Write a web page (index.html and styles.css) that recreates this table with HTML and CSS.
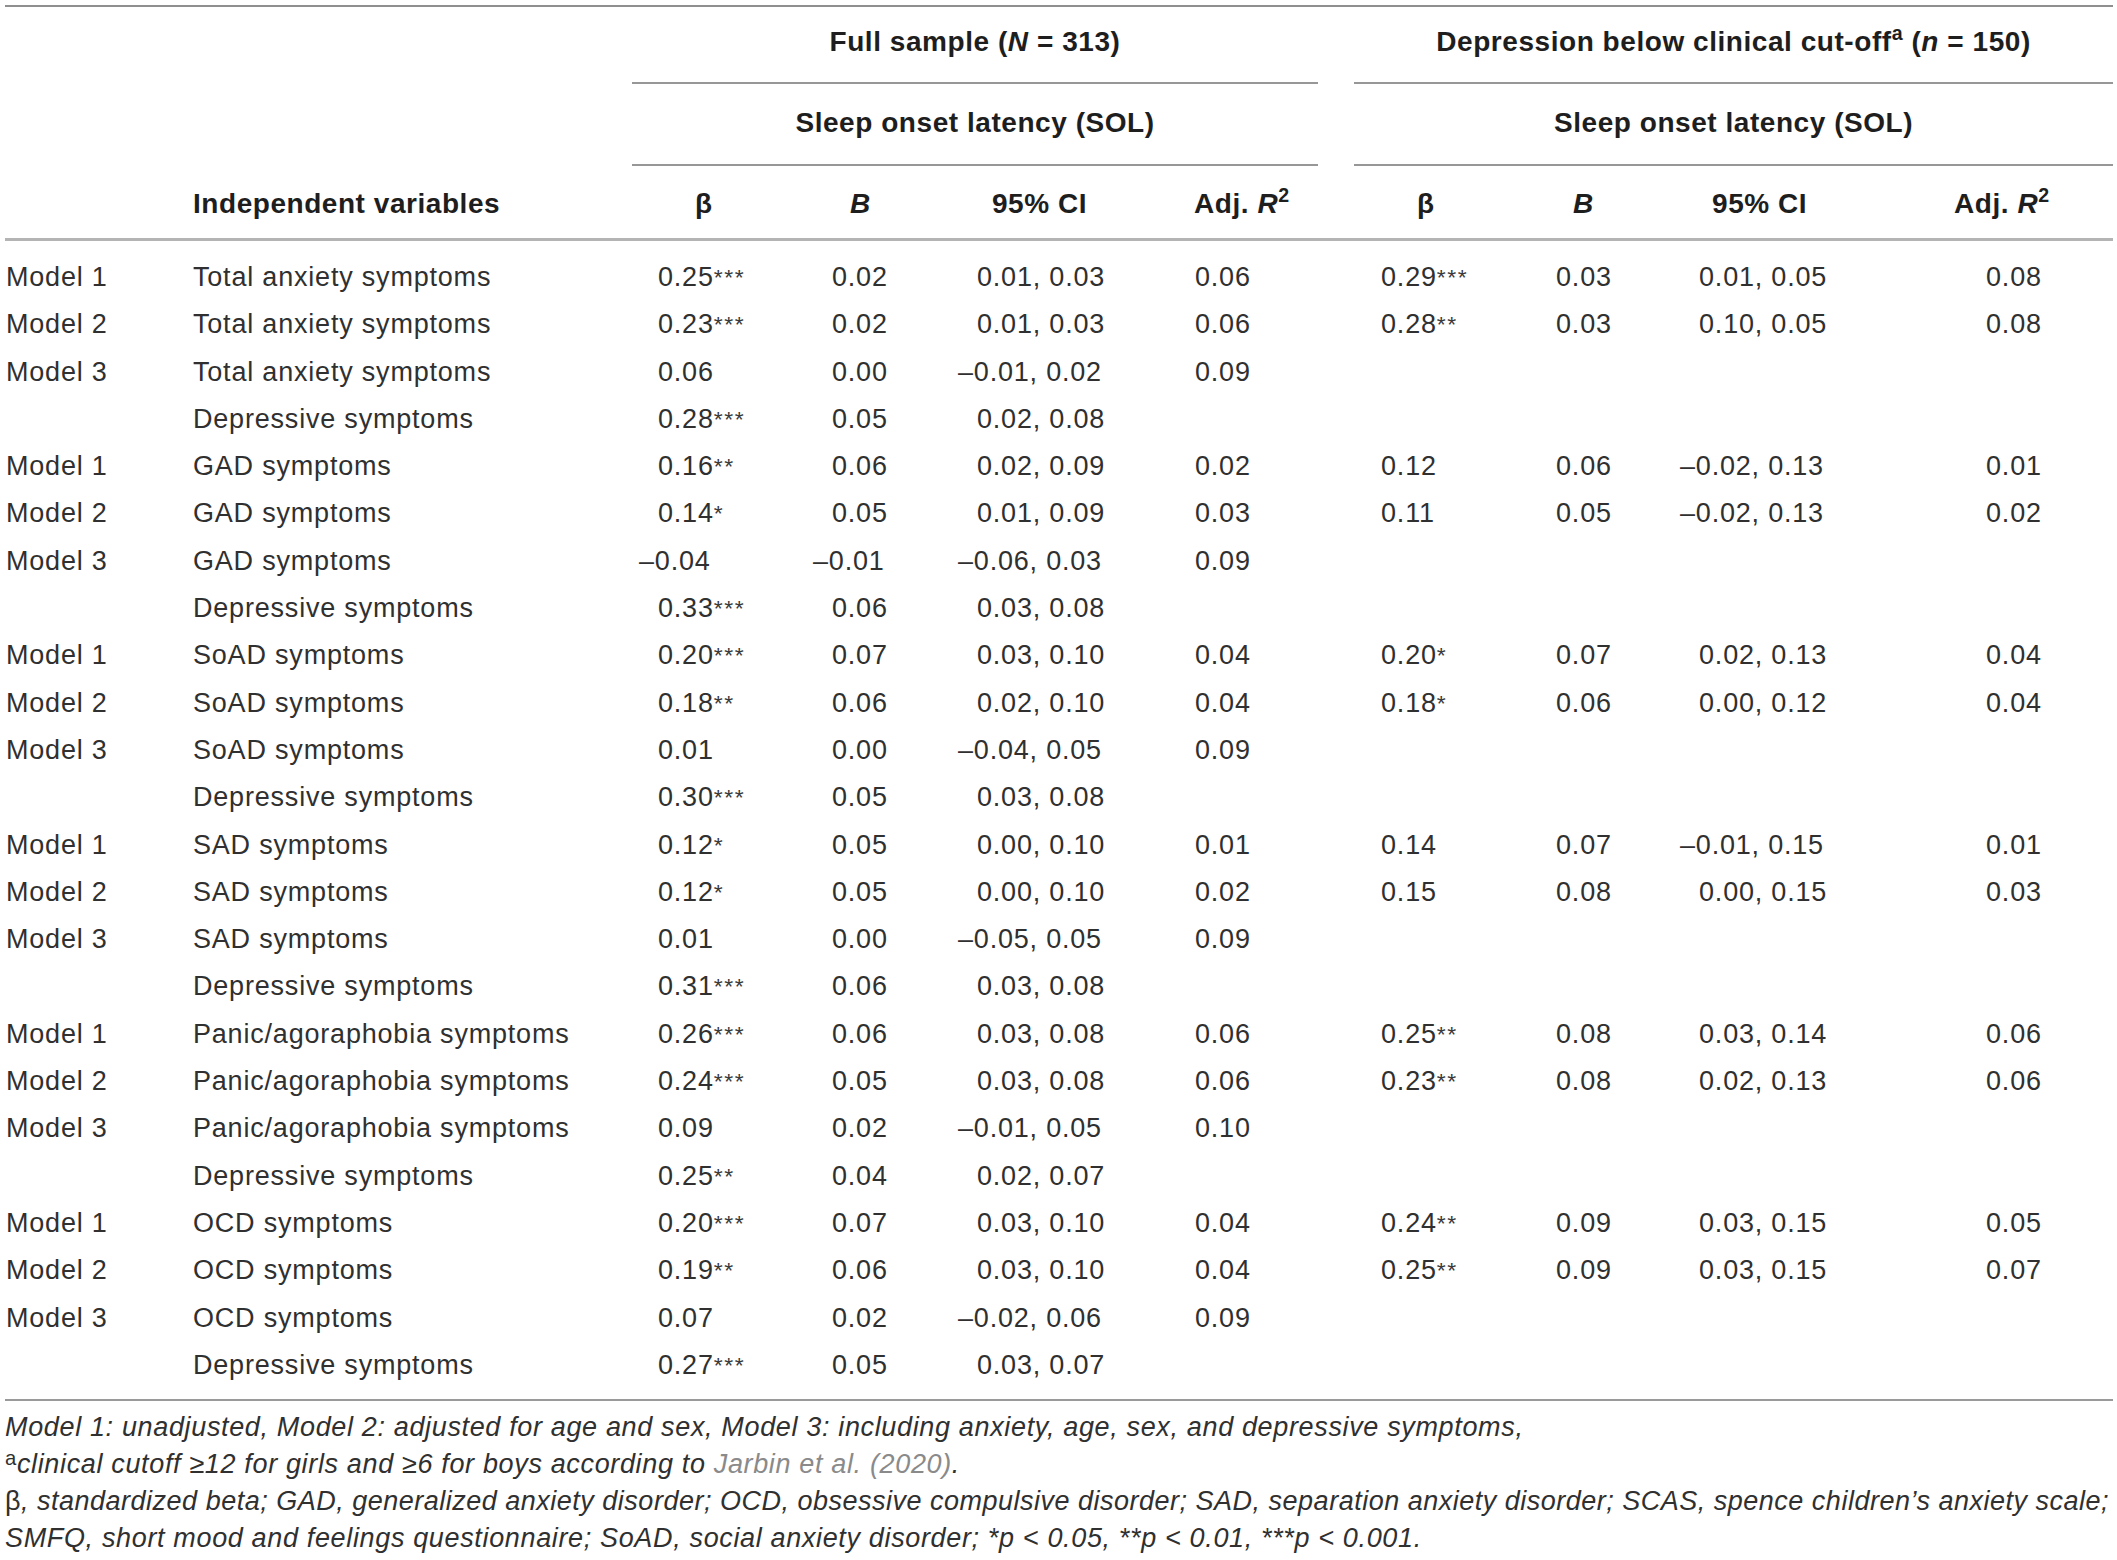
FILE: index.html
```html
<!DOCTYPE html>
<html lang="en">
<head>
<meta charset="utf-8">
<title>Table</title>
<link rel="stylesheet" href="styles.css">
</head>
<body>
<div class="page">
<table class="tbl">
  <colgroup>
    <col class="w-model"><col class="w-var">
    <col class="w-b1"><col class="w-bb1"><col class="w-ci1"><col class="w-adj1">
    <col class="w-gap">
    <col class="w-b2"><col class="w-bb2"><col class="w-ci2"><col class="w-adj2">
  </colgroup>
  <thead>
    <tr class="h1">
      <th colspan="2"></th>
      <th colspan="4" class="grp">Full sample (<i>N</i> = 313)</th>
      <th class="gap"></th>
      <th colspan="4" class="grp">Depression below clinical cut-off<sup class="hs">a</sup> (<i>n</i> = 150)</th>
    </tr>
    <tr class="h2">
      <th colspan="2"></th>
      <th colspan="4" class="grp">Sleep onset latency (SOL)</th>
      <th class="gap"></th>
      <th colspan="4" class="grp">Sleep onset latency (SOL)</th>
    </tr>
    <tr class="h3">
      <th class="c-model"></th>
      <th class="c-var">Independent variables</th>
      <th class="hb1 beta">β</th>
      <th class="hbb1"><i>B</i></th>
      <th class="hci1">95% CI</th>
      <th class="hadj1">Adj. <i>R</i><sup class="hs">2</sup></th>
      <th class="gap"></th>
      <th class="hb2 beta">β</th>
      <th class="hbb2"><i>B</i></th>
      <th class="hci2">95% CI</th>
      <th class="hadj2">Adj. <i>R</i><sup class="hs">2</sup></th>
    </tr>
  </thead>
  <tbody>
    <tr class="first"><td class="c-model">Model 1</td><td class="c-var">Total anxiety symptoms</td><td class="b1">0.25<span class="st">***</span></td><td class="bb1">0.02</td><td class="ci1">0.01, 0.03</td><td class="adj1">0.06</td><td></td><td class="b2">0.29<span class="st">***</span></td><td class="bb2">0.03</td><td class="ci2">0.01, 0.05</td><td class="adj2">0.08</td></tr>
    <tr><td class="c-model">Model 2</td><td class="c-var">Total anxiety symptoms</td><td class="b1">0.23<span class="st">***</span></td><td class="bb1">0.02</td><td class="ci1">0.01, 0.03</td><td class="adj1">0.06</td><td></td><td class="b2">0.28<span class="st">**</span></td><td class="bb2">0.03</td><td class="ci2">0.10, 0.05</td><td class="adj2">0.08</td></tr>
    <tr><td class="c-model">Model 3</td><td class="c-var">Total anxiety symptoms</td><td class="b1">0.06</td><td class="bb1">0.00</td><td class="ci1 neg">–0.01, 0.02</td><td class="adj1">0.09</td><td></td><td></td><td></td><td></td><td></td></tr>
    <tr><td class="c-model"></td><td class="c-var">Depressive symptoms</td><td class="b1">0.28<span class="st">***</span></td><td class="bb1">0.05</td><td class="ci1">0.02, 0.08</td><td class="adj1"></td><td></td><td></td><td></td><td></td><td></td></tr>

    <tr><td class="c-model">Model 1</td><td class="c-var">GAD symptoms</td><td class="b1">0.16<span class="st">**</span></td><td class="bb1">0.06</td><td class="ci1">0.02, 0.09</td><td class="adj1">0.02</td><td></td><td class="b2">0.12</td><td class="bb2">0.06</td><td class="ci2 neg">–0.02, 0.13</td><td class="adj2">0.01</td></tr>
    <tr><td class="c-model">Model 2</td><td class="c-var">GAD symptoms</td><td class="b1">0.14<span class="st">*</span></td><td class="bb1">0.05</td><td class="ci1">0.01, 0.09</td><td class="adj1">0.03</td><td></td><td class="b2">0.11</td><td class="bb2">0.05</td><td class="ci2 neg">–0.02, 0.13</td><td class="adj2">0.02</td></tr>
    <tr><td class="c-model">Model 3</td><td class="c-var">GAD symptoms</td><td class="b1 neg">–0.04</td><td class="bb1 neg">–0.01</td><td class="ci1 neg">–0.06, 0.03</td><td class="adj1">0.09</td><td></td><td></td><td></td><td></td><td></td></tr>
    <tr><td class="c-model"></td><td class="c-var">Depressive symptoms</td><td class="b1">0.33<span class="st">***</span></td><td class="bb1">0.06</td><td class="ci1">0.03, 0.08</td><td class="adj1"></td><td></td><td></td><td></td><td></td><td></td></tr>

    <tr><td class="c-model">Model 1</td><td class="c-var">SoAD symptoms</td><td class="b1">0.20<span class="st">***</span></td><td class="bb1">0.07</td><td class="ci1">0.03, 0.10</td><td class="adj1">0.04</td><td></td><td class="b2">0.20<span class="st">*</span></td><td class="bb2">0.07</td><td class="ci2">0.02, 0.13</td><td class="adj2">0.04</td></tr>
    <tr><td class="c-model">Model 2</td><td class="c-var">SoAD symptoms</td><td class="b1">0.18<span class="st">**</span></td><td class="bb1">0.06</td><td class="ci1">0.02, 0.10</td><td class="adj1">0.04</td><td></td><td class="b2">0.18<span class="st">*</span></td><td class="bb2">0.06</td><td class="ci2">0.00, 0.12</td><td class="adj2">0.04</td></tr>
    <tr><td class="c-model">Model 3</td><td class="c-var">SoAD symptoms</td><td class="b1">0.01</td><td class="bb1">0.00</td><td class="ci1 neg">–0.04, 0.05</td><td class="adj1">0.09</td><td></td><td></td><td></td><td></td><td></td></tr>
    <tr><td class="c-model"></td><td class="c-var">Depressive symptoms</td><td class="b1">0.30<span class="st">***</span></td><td class="bb1">0.05</td><td class="ci1">0.03, 0.08</td><td class="adj1"></td><td></td><td></td><td></td><td></td><td></td></tr>

    <tr><td class="c-model">Model 1</td><td class="c-var">SAD symptoms</td><td class="b1">0.12<span class="st">*</span></td><td class="bb1">0.05</td><td class="ci1">0.00, 0.10</td><td class="adj1">0.01</td><td></td><td class="b2">0.14</td><td class="bb2">0.07</td><td class="ci2 neg">–0.01, 0.15</td><td class="adj2">0.01</td></tr>
    <tr><td class="c-model">Model 2</td><td class="c-var">SAD symptoms</td><td class="b1">0.12<span class="st">*</span></td><td class="bb1">0.05</td><td class="ci1">0.00, 0.10</td><td class="adj1">0.02</td><td></td><td class="b2">0.15</td><td class="bb2">0.08</td><td class="ci2">0.00, 0.15</td><td class="adj2">0.03</td></tr>
    <tr><td class="c-model">Model 3</td><td class="c-var">SAD symptoms</td><td class="b1">0.01</td><td class="bb1">0.00</td><td class="ci1 neg">–0.05, 0.05</td><td class="adj1">0.09</td><td></td><td></td><td></td><td></td><td></td></tr>
    <tr><td class="c-model"></td><td class="c-var">Depressive symptoms</td><td class="b1">0.31<span class="st">***</span></td><td class="bb1">0.06</td><td class="ci1">0.03, 0.08</td><td class="adj1"></td><td></td><td></td><td></td><td></td><td></td></tr>

    <tr><td class="c-model">Model 1</td><td class="c-var">Panic/agoraphobia symptoms</td><td class="b1">0.26<span class="st">***</span></td><td class="bb1">0.06</td><td class="ci1">0.03, 0.08</td><td class="adj1">0.06</td><td></td><td class="b2">0.25<span class="st">**</span></td><td class="bb2">0.08</td><td class="ci2">0.03, 0.14</td><td class="adj2">0.06</td></tr>
    <tr><td class="c-model">Model 2</td><td class="c-var">Panic/agoraphobia symptoms</td><td class="b1">0.24<span class="st">***</span></td><td class="bb1">0.05</td><td class="ci1">0.03, 0.08</td><td class="adj1">0.06</td><td></td><td class="b2">0.23<span class="st">**</span></td><td class="bb2">0.08</td><td class="ci2">0.02, 0.13</td><td class="adj2">0.06</td></tr>
    <tr><td class="c-model">Model 3</td><td class="c-var">Panic/agoraphobia symptoms</td><td class="b1">0.09</td><td class="bb1">0.02</td><td class="ci1 neg">–0.01, 0.05</td><td class="adj1">0.10</td><td></td><td></td><td></td><td></td><td></td></tr>
    <tr><td class="c-model"></td><td class="c-var">Depressive symptoms</td><td class="b1">0.25<span class="st">**</span></td><td class="bb1">0.04</td><td class="ci1">0.02, 0.07</td><td class="adj1"></td><td></td><td></td><td></td><td></td><td></td></tr>

    <tr><td class="c-model">Model 1</td><td class="c-var">OCD symptoms</td><td class="b1">0.20<span class="st">***</span></td><td class="bb1">0.07</td><td class="ci1">0.03, 0.10</td><td class="adj1">0.04</td><td></td><td class="b2">0.24<span class="st">**</span></td><td class="bb2">0.09</td><td class="ci2">0.03, 0.15</td><td class="adj2">0.05</td></tr>
    <tr><td class="c-model">Model 2</td><td class="c-var">OCD symptoms</td><td class="b1">0.19<span class="st">**</span></td><td class="bb1">0.06</td><td class="ci1">0.03, 0.10</td><td class="adj1">0.04</td><td></td><td class="b2">0.25<span class="st">**</span></td><td class="bb2">0.09</td><td class="ci2">0.03, 0.15</td><td class="adj2">0.07</td></tr>
    <tr><td class="c-model">Model 3</td><td class="c-var">OCD symptoms</td><td class="b1">0.07</td><td class="bb1">0.02</td><td class="ci1 neg">–0.02, 0.06</td><td class="adj1">0.09</td><td></td><td></td><td></td><td></td><td></td></tr>
    <tr class="last"><td class="c-model"></td><td class="c-var">Depressive symptoms</td><td class="b1">0.27<span class="st">***</span></td><td class="bb1">0.05</td><td class="ci1">0.03, 0.07</td><td class="adj1"></td><td></td><td></td><td></td><td></td><td></td></tr>
  </tbody>
</table>
<div class="notes">
  <p class="note">Model 1: unadjusted, Model 2: adjusted for age and sex, Model 3: including anxiety, age, sex, and depressive symptoms,</p>
  <p class="note"><sup class="ns">a</sup>clinical cutoff ≥12 for girls and ≥6 for boys according to <a class="ref">Jarbin et al. (2020)</a>.</p>
  <p class="note tight"><span class="up">β</span>, standardized beta; GAD, generalized anxiety disorder; OCD, obsessive compulsive disorder; SAD, separation anxiety disorder; SCAS, spence children’s anxiety scale;</p>
  <p class="note">SMFQ, short mood and feelings questionnaire; SoAD, social anxiety disorder; *p &lt; 0.05, **p &lt; 0.01, ***p &lt; 0.001.</p>
</div>
</div>
</body>
</html>
```

FILE: styles.css
```css
html, body {
  margin: 0;
  padding: 0;
  background: #ffffff;
}

body {
  font-family: "Liberation Sans", Arial, sans-serif;
  color: #303030;
}

.page {
  padding: 5px 4px 0 5px;
}

.tbl {
  border-collapse: collapse;
  table-layout: fixed;
  width: 2108px;
}

.w-model { width: 185px; }
.w-var { width: 442px; }
.w-b1 { width: 148px; }
.w-bb1 { width: 170px; }
.w-ci1 { width: 200px; }
.w-adj1 { width: 168px; }
.w-gap { width: 36px; }
.w-b2 { width: 166px; }
.w-bb2 { width: 150px; }
.w-ci2 { width: 260px; }
.w-adj2 { width: 183px; }

/* header */
.tbl th {
  font-size: 28px;
  line-height: 32px;
  font-weight: bold;
  letter-spacing: 0.55px;
  color: #1e1e1e;
  text-align: left;
  white-space: nowrap;
  padding: 0;
}

.tbl th.grp {
  text-align: center;
  border-bottom: 2px solid #979797;
}

.h1 th {
  border-top: 2px solid #8f8f8f;
  padding-top: 19px;
  padding-bottom: 24px;
}

.h2 th {
  padding-top: 23px;
  padding-bottom: 25px;
}

.h3 th {
  padding-top: 22px;
  padding-bottom: 18px;
  border-bottom: 3px solid #b4b4b4;
}

.hs {
  font-size: 0.7em;
  line-height: 0;
  vertical-align: 0.55em;
  font-style: normal;
}

.beta {
  font-weight: normal;
}

.c-model { padding-left: 1px !important; }
.c-var { padding-left: 3px !important; }

.hb1 { padding-left: 63px !important; }
.hbb1 { padding-left: 70px !important; }
.hci1 { padding-left: 42px !important; }
.hadj1 { padding-left: 44px !important; }
.hb2 { padding-left: 63px !important; }
.hbb2 { padding-left: 53px !important; }
.hci2 { padding-left: 42px !important; }
.hadj2 { padding-left: 24px !important; }

/* body */
.tbl td {
  font-size: 27px;
  line-height: 47.3px;
  letter-spacing: 0.8px;
  padding: 0;
  white-space: nowrap;
  text-align: left;
}

.tbl tr.first td { padding-top: 13px; }
.tbl tr.last td { padding-bottom: 10px; border-bottom: 2px solid #9a9a9a; }

.st {
  font-size: 0.85em;
  line-height: 0;
  letter-spacing: 1.6px;
  color: #3a3a3a;
  position: relative;
  top: -1px;
}

.b1 { padding-left: 26px !important; }
.bb1 { padding-left: 52px !important; }
.ci1 { padding-left: 27px !important; }
.adj1 { padding-left: 45px !important; }
.b2 { padding-left: 27px !important; }
.bb2 { padding-left: 36px !important; }
.ci2 { padding-left: 29px !important; }
.adj2 { padding-left: 56px !important; }

.neg { text-indent: -19px; }

/* notes */
.notes {
  padding-top: 8px;
}

.note {
  margin: 0;
  font-size: 27px;
  line-height: 37px;
  letter-spacing: 0.65px;
  font-style: italic;
  white-space: nowrap;
  color: #303030;
}

.note.tight {
  letter-spacing: 0.5px;
}

.ns {
  font-style: normal;
  font-size: 0.75em;
  line-height: 0;
  vertical-align: 0.4em;
}

.up { font-style: normal; }

.ref {
  color: #8a8a8a;
  text-decoration: none;
}
```
